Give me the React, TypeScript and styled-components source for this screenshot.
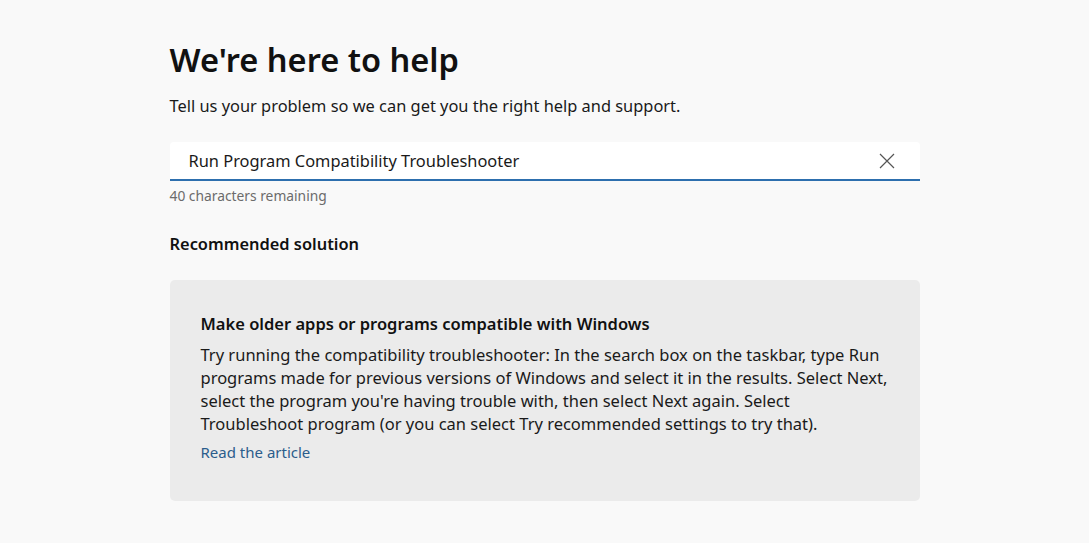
import React from "react";
import styled, { createGlobalStyle } from "styled-components";

const Global = createGlobalStyle`
  html, body { margin: 0; padding: 0; background: #f9f9f9; }
  body { font-family: "Segoe UI", "Noto Sans", "Open Sans", sans-serif; color: #1a1a1a; }
`;

const Page = styled.main`
  width: 750px;
  margin: 0 auto;
  padding-top: 37px;
`;

const Title = styled.h1`
  margin: 0;
  font-size: 32.6px;
  font-weight: 600;
  line-height: 46px;
  color: #111;
`;

const Subtitle = styled.p`
  margin: 12px 0 0;
  font-size: 16.4px;
  line-height: 22px;
  color: #1a1a1a;
`;

const Field = styled.div`
  margin-top: 25px;
  height: 37px;
  background: #fff;
  border-bottom: 2px solid #2d6fae;
  border-radius: 4px 4px 0 0;
  display: flex;
  align-items: center;
  padding: 0 24px 0 19px;
`;

const Input = styled.input`
  flex: 1;
  border: none;
  outline: none;
  background: transparent;
  font: inherit;
  font-size: 16.4px;
  color: #1a1a1a;
  padding: 0;
`;

const ClearButton = styled.button`
  border: none;
  background: none;
  padding: 0;
  width: 18px;
  height: 18px;
  display: flex;
  align-items: center;
  justify-content: center;
  cursor: pointer;
`;

const Hint = styled.div`
  margin-top: 6px;
  font-size: 13.8px;
  line-height: 18px;
  color: #6b6b6b;
`;

const SectionHeading = styled.h2`
  margin: 28px 0 0;
  font-size: 16.4px;
  font-weight: 600;
  line-height: 22px;
  color: #111;
`;

const Card = styled.section`
  margin-top: 25px;
  background: #ebebeb;
  border-radius: 5px;
  padding: 32px 31px 40px;
  height: 221px;
  box-sizing: border-box;
`;

const CardTitle = styled.h3`
  margin: 0 0 8px;
  font-size: 16.5px;
  font-weight: 600;
  line-height: 23px;
  color: #111;
`;

const CardBody = styled.p`
  margin: 0;
  font-size: 16.5px;
  line-height: 23px;
  color: #1a1a1a;
`;

const Link = styled.a`
  display: inline-block;
  margin-top: 7px;
  font-size: 15px;
  line-height: 20px;
  color: #2b5d8c;
  text-decoration: none;
`;

export default function App() {
  return (
    <>
      <Global />
      <Page>
        <Title>We're here to help</Title>
        <Subtitle>Tell us your problem so we can get you the right help and support.</Subtitle>
        <Field>
          <Input defaultValue="Run Program Compatibility Troubleshooter" />
          <ClearButton aria-label="Clear">
            <svg width="16" height="16" viewBox="0 0 16 16">
              <path d="M1 1 L15 15 M15 1 L1 15" stroke="#555" strokeWidth="1.2" fill="none" />
            </svg>
          </ClearButton>
        </Field>
        <Hint>40 characters remaining</Hint>
        <SectionHeading>Recommended solution</SectionHeading>
        <Card>
          <CardTitle>Make older apps or programs compatible with Windows</CardTitle>
          <CardBody>
            Try running the compatibility troubleshooter: In the search box on the taskbar, type Run
            programs made for previous versions of Windows and select it in the results. Select Next,
            select the program you're having trouble with, then select Next again. Select
            Troubleshoot program (or you can select Try recommended settings to try that).
          </CardBody>
          <Link href="#">Read the article</Link>
        </Card>
      </Page>
    </>
  );
}
